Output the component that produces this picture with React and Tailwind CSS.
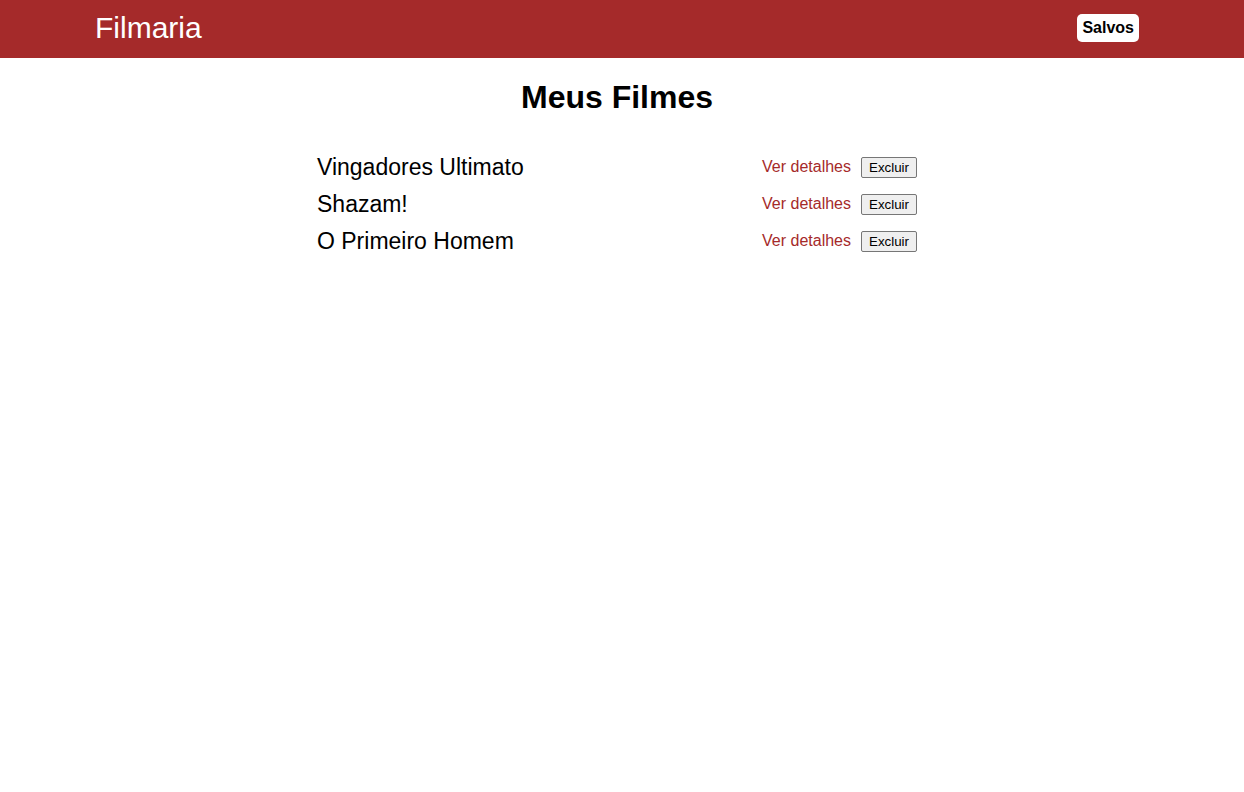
export default function App() {
  const filmes = ["Vingadores Ultimato", "Shazam!", "O Primeiro Homem"];
  return (
    <div className="min-h-[792px] bg-white text-black" style={{ fontFamily: '"Liberation Sans", Arial, sans-serif' }}>
      <header className="h-[58px] bg-[#a52a2a] flex items-center justify-between pl-[95px] pr-[105px]">
        <a className="text-white text-[30px] leading-[34px] mb-[2px]">Filmaria</a>
        <a className="bg-white text-black font-bold text-[16px] leading-[18px] px-[5px] py-[5px] rounded-[5px] mb-[2px]">Salvos</a>
      </header>
      <main className="flex flex-col items-center pr-[10px]">
        <h1 className="mt-[21px] text-[32px] font-bold leading-[37px]">Meus Filmes</h1>
        <ul className="mt-[33px] w-[600px]">
          {filmes.map((f) => (
            <li key={f} className="flex items-center justify-between h-[37px]">
              <span className="text-[23px] leading-[27px]">{f}</span>
              <div className="flex items-center">
                <a className="text-[#a52a2a] text-[16px] leading-[18px] mb-[2px]">Ver detalhes</a>
                <button className="ml-[10px] text-[13.33px] leading-[15px] px-[7px] py-[2px] border border-[#767676] rounded-[2px] bg-[#efefef] text-black">Excluir</button>
              </div>
            </li>
          ))}
        </ul>
      </main>
    </div>
  );
}
